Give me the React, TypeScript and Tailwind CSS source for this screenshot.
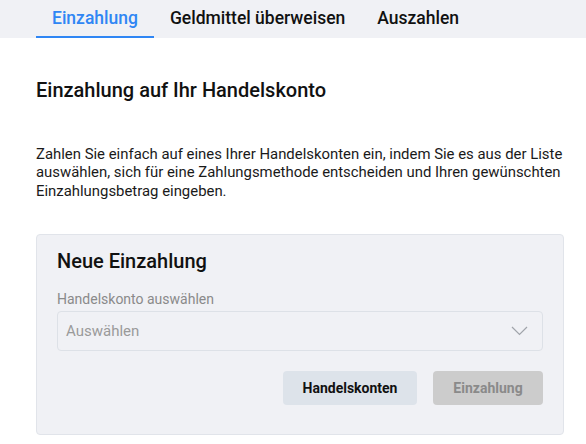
import React from "react";

export default function App() {
  return (
    <div className="w-[586px] h-[444px] bg-white overflow-hidden text-[#111111]" style={{ fontFamily: "Roboto, 'Liberation Sans', sans-serif" }}>
      <div className="h-[38px] bg-[#f0f1f5] pl-[36px] flex">
        <div className="px-4 flex items-center border-b-2 border-[#2f86f4] text-[#2f86f4] text-[17.5px] font-medium">Einzahlung</div>
        <div className="px-4 flex items-center border-b-2 border-transparent text-[17.5px] font-medium">Geldmittel überweisen</div>
        <div className="px-4 flex items-center border-b-2 border-transparent text-[17.5px] font-medium">Auszahlen</div>
      </div>
      <div className="pl-[36px] w-[564px]">
        <h1 className="mt-[38px] text-xl leading-7 font-medium">Einzahlung auf Ihr Handelskonto</h1>
        <p className="mt-[41px] w-[536px] text-[14.9px] leading-[18.4px] text-[#1a1a1a]">
          Zahlen Sie einfach auf eines Ihrer Handelskonten ein, indem Sie es aus der Liste auswählen, sich für eine Zahlungsmethode entscheiden und Ihren gewünschten Einzahlungsbetrag eingeben.
        </p>
        <div className="mt-[34px] bg-[#f0f1f5] border border-[#e1e4ea] rounded px-5 pt-3 pb-[29px]">
          <h2 className="text-xl leading-7 font-medium">Neue Einzahlung</h2>
          <div className="mt-[14px] text-sm leading-5 text-[#8a8a8a]">Handelskonto auswählen</div>
          <div className="mt-[2px] h-[40px] border border-[#dde1e7] rounded flex items-center justify-between pl-2 pr-[14px]">
            <span className="text-[15px] text-[#9a9a9a]">Auswählen</span>
            <svg width="17" height="10" viewBox="0 0 17 10" fill="none">
              <path d="M1 1l7.5 7.5L16 1" stroke="#a0a4aa" strokeWidth="1.2" />
            </svg>
          </div>
          <div className="mt-5 flex justify-end gap-4">
            <button className="h-[34px] w-[134px] rounded bg-[#dde3ea] text-sm font-bold text-[#111]">Handelskonten</button>
            <button className="h-[34px] w-[110px] rounded bg-[#cccccc] text-sm font-bold text-[#8a8a8a]">Einzahlung</button>
          </div>
        </div>
      </div>
    </div>
  );
}
